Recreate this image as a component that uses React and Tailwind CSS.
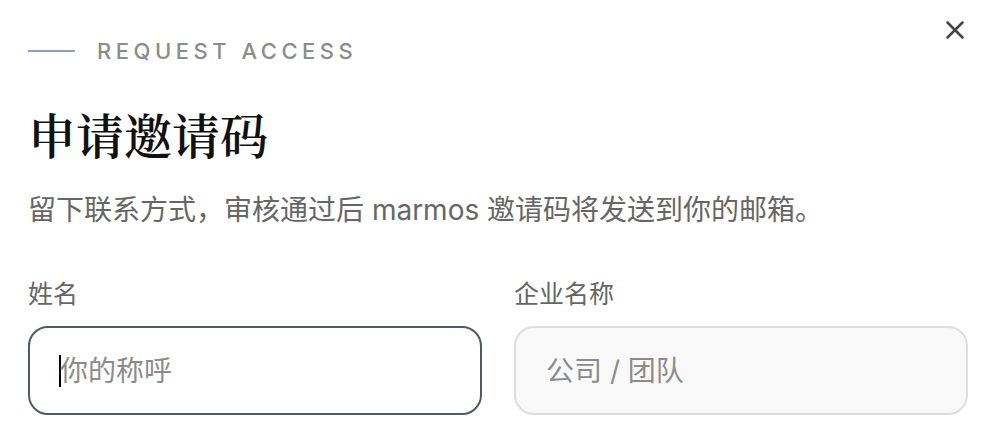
import { X } from "lucide-react";

const sans = { fontFamily: '"Inter", "Noto Sans CJK SC", sans-serif' };

function Field({ label, placeholder, active }) {
  return (
    <div className="flex flex-col">
      <label className="text-[25px] leading-[24px] text-[#666666]" style={sans}>
        {label}
      </label>
      <div
        className={
          active
            ? "mt-[20px] h-[89px] rounded-[20px] border-2 border-[#4f5a67] bg-white flex items-center px-[29px]"
            : "mt-[20px] h-[89px] rounded-[20px] border-2 border-[#dedede] bg-[#f9f9f9] flex items-center px-[30px]"
        }
      >
        {active && <span className="w-[2px] h-[32px] bg-black -mr-[1px]" />}
        <span className="text-[28px] leading-[32px] text-[#8c8c8c]" style={sans}>
          {placeholder}
        </span>
      </div>
    </div>
  );
}

export default function App() {
  return (
    <div className="relative w-[996px] h-[432px] overflow-hidden bg-white px-[28px] pt-[37px]">
      <button className="absolute top-[15px] right-[26px] text-[#444444]">
        <X size={30} strokeWidth={2} />
      </button>

      <div className="flex items-center gap-[22px] h-[28px]">
        <span className="w-[47px] h-[2px] bg-[#8ba2b8]" />
        <span
          className="text-[22px] leading-[28px] tracking-[0.205em] text-[#8c8c8c] font-medium"
          style={sans}
        >
          REQUEST ACCESS
        </span>
      </div>

      <h1
        className="mt-[45px] text-[48px] leading-[48px] font-semibold text-[#111111]"
        style={{ fontFamily: '"Noto Serif CJK SC", "Noto Sans CJK SC", serif' }}
      >
        申请邀请码
      </h1>

      <p className="mt-[38px] text-[28px] leading-[28px] text-[#666666]" style={sans}>
        留下联系方式，审核通过后 marmos 邀请码将发送到你的邮箱。
      </p>

      <div className="mt-[58px] grid grid-cols-2 gap-[32px]">
        <Field label="姓名" placeholder="你的称呼" active />
        <Field label="企业名称" placeholder="公司 / 团队" />
      </div>
    </div>
  );
}
